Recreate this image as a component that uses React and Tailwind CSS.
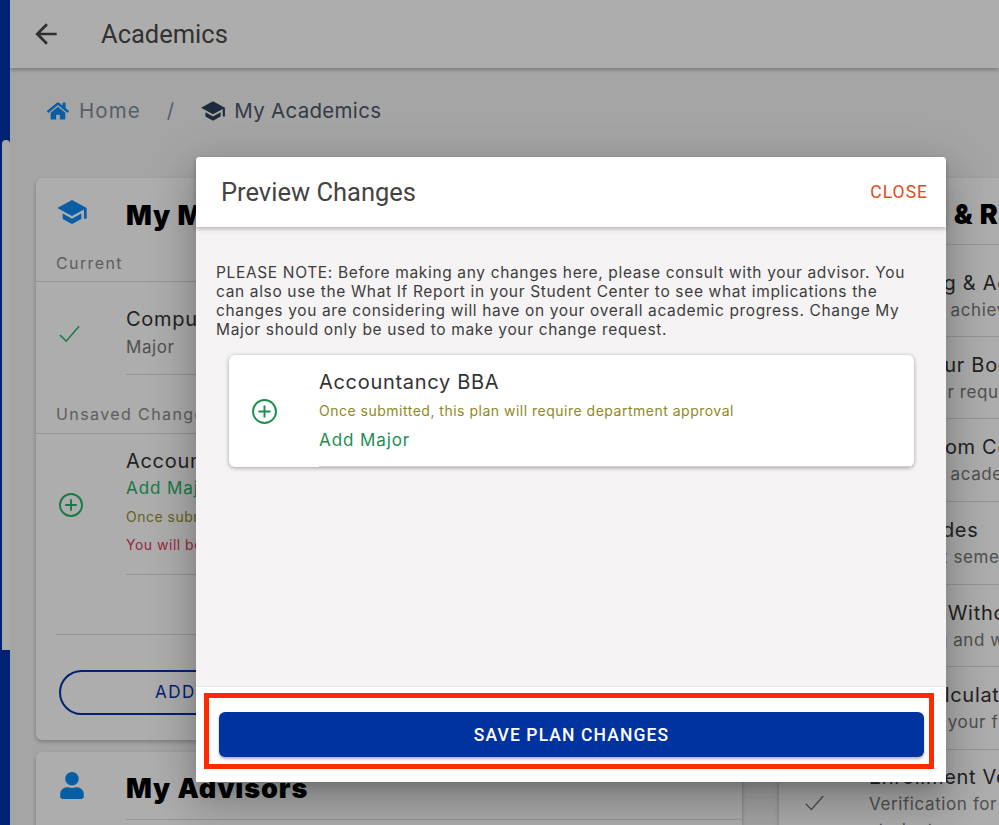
import React from "react";
import { FaHome, FaUser } from "react-icons/fa";
import { MdArrowBack, MdSchool } from "react-icons/md";

const mont = "font-['Inter','Liberation_Sans',sans-serif]";
const robo = "font-['Roboto','Liberation_Sans',sans-serif]";

function Check({ className }) {
  return (
    <svg viewBox="0 0 24 24" className={className} fill="none" stroke="currentColor" strokeWidth="1.6">
      <path d="M2 13.5 L8.5 20 L22 4.5" />
    </svg>
  );
}

function PlusCircle({ className }) {
  return (
    <svg viewBox="0 0 24 24" className={className} fill="none" stroke="currentColor" strokeWidth="1.9">
      <circle cx="12" cy="12" r="11" />
      <path d="M12 6.2 V17.8 M6.2 12 H17.8" />
    </svg>
  );
}

const rightItems = [
  ["Tracking & Advising", "See your achievements", "h-[92px] pt-[10px]"],
  ["Find Your Books", "View your requests", "h-[82px]"],
  ["Classroom Connect", "See your academic", "h-[83px]"],
  ["My Grades", "Your first semester", "h-[83px]"],
  ["Course Without", "Dropping and withdrawal", "h-[82px]"],
  ["GPA Calculator", "Estimate your final", "h-[83px]"],
];

const title = "text-[20px] leading-[28px] tracking-[0.7px] text-[#333]";
const sub = "text-[17px] leading-[26px] tracking-[0.6px] text-[#777]";
const heading = "text-[27px] font-black tracking-[0.9px] text-black";
const label = "text-[16px] tracking-[1.4px] text-[#8a8a8a]";

export default function App() {
  return (
    <div className={`relative flex h-[825px] w-[999px] overflow-hidden bg-[#f5f3f4] ${mont}`}>
      <aside className="relative w-[10px] shrink-0 bg-[#0033a8]">
        <div className="absolute left-[2px] top-[140px] h-[510px] w-[8px] rounded-t-full rounded-b-[3px] bg-[#fafafa]" />
      </aside>
      <main className="flex min-w-0 flex-1 flex-col">
        <header className="flex h-[68px] shrink-0 items-center bg-white pl-[20px] shadow-[0_2px_4px_rgba(0,0,0,0.25)]">
          <MdArrowBack className="text-[32px] text-[#444]" />
          <h1 className={`ml-[39px] text-[25.5px] text-[#4a4a4a] ${robo}`}>Academics</h1>
        </header>
        <nav className="flex h-[86px] shrink-0 items-center pl-[37px] text-[20.5px]">
          <FaHome className="text-[22px] text-[#0e8af4]" />
          <span className="ml-[10px] tracking-[1.1px] text-[#7f8c9f]">Home</span>
          <span className="ml-[26px] text-[#7f8c9f]">/</span>
          <MdSchool className="ml-[26px] text-[26px] text-[#2a3f57]" />
          <span className="ml-[8px] tracking-[0.3px] text-[#4d5866]">My Academics</span>
        </nav>
        <div className="mt-[24px] grid grid-cols-[706px_400px] gap-x-[37px] pl-[26px]">
          <div className="flex flex-col gap-[12px]">
            <section className="flex h-[562px] flex-col rounded-[6px] bg-white shadow-[0_2px_4px_rgba(0,0,0,0.25)]">
              <div className="flex h-[68px] shrink-0 items-center pl-[20px]">
                <MdSchool className="text-[32px] text-[#0e8af4]" />
                <h2 className={`ml-[38px] mt-[8px] ${heading}`}>My Majors &amp; Minors</h2>
              </div>
              <div className={`flex h-[36px] items-center border-b border-[#dcdcdc] pb-[2px] pl-[20px] ${label}`}>Current</div>
              <div className="flex h-[93px] items-center pl-[22px]">
                <Check className="mt-[10px] h-[23px] w-[23px] text-[#26b368]" />
                <div className="ml-[45px] flex h-full flex-1 flex-col justify-center border-b border-[#dcdcdc] pt-[10px]">
                  <span className={title}>Computer Science BS</span>
                  <span className={`${sub} leading-[28px]`}>Major</span>
                </div>
              </div>
              <div className={`flex h-[59px] items-end border-b border-[#dcdcdc] pb-[7px] pl-[20px] ${label}`}>Unsaved Changes</div>
              <div className="flex h-[141px] items-center pl-[23px]">
                <PlusCircle className="h-[24px] w-[24px] text-[#26b368]" />
                <div className="ml-[43px] flex h-full flex-1 flex-col border-b border-[#dcdcdc] pt-[13px]">
                  <span className={title}>Accountancy BBA</span>
                  <span className="text-[17px] leading-[26px] tracking-[0.9px] text-[#26b368]">Add Major</span>
                  <span className="mt-[7px] text-[14px] leading-[18px] tracking-[0.5px] text-[#968f2a]">Once submitted, this plan will require department approval</span>
                  <span className="mt-[10px] text-[14px] leading-[18px] tracking-[0.5px] text-[#e0395f]">You will be asked to confirm</span>
                </div>
              </div>
              <div className="mx-[20px] mt-[59px] border-t border-[#dcdcdc]" />
              <button className="mx-[23px] mt-[35px] h-[45px] rounded-full border-2 border-[#0033a8] pl-[94px] text-left text-[17px] tracking-[1.5px] text-[#0033a8]">ADD A PLAN</button>
            </section>
            <section className="h-[200px] rounded-[6px] bg-white shadow-[0_2px_4px_rgba(0,0,0,0.25)]">
              <div className="flex h-[67px] items-center pl-[21px]">
                <FaUser className="w-[30px] text-[27px] text-[#0e8af4]" />
                <h2 className={`ml-[39px] mt-[8px] ${heading}`}>My Advisors</h2>
              </div>
              <div className="ml-[90px] border-t border-[#dcdcdc]" />
            </section>
          </div>
          <section className="h-[700px] rounded-[6px] bg-white shadow-[0_2px_4px_rgba(0,0,0,0.25)]">
            <div className="flex h-[67px] items-center border-b border-[#dcdcdc] pl-[90px]">
              <h2 className={`mt-[8px] whitespace-nowrap ${heading}`}>Tools &amp; Resources</h2>
            </div>
            {rightItems.map(([t, s, h]) => (
              <div key={t} className={`flex flex-col justify-center border-b border-[#dcdcdc] pl-[90px] ${h}`}>
                <span className={`whitespace-nowrap ${title}`}>{t}</span>
                <span className={`whitespace-nowrap ${sub}`}>{s}</span>
              </div>
            ))}
            <div className="flex items-start pl-[25px] pt-[13px]">
              <Check className="mt-[29px] h-[21px] w-[21px] text-[#777]" />
              <div className="ml-[44px]">
                <div className={`whitespace-nowrap ${title}`}>Enrollment Verification</div>
                <div className={`whitespace-nowrap ${sub}`}>Verification for</div>
                <div className={`whitespace-nowrap ${sub}`}>students</div>
              </div>
            </div>
          </section>
        </div>
      </main>

      <div className="absolute inset-0 bg-[rgba(0,0,0,0.32)]" />

      <div className="absolute left-[196px] top-[157px] flex h-[625px] w-[750px] flex-col rounded-[4px] bg-[#f5f3f4] shadow-[0_11px_15px_-7px_rgba(0,0,0,0.2),0_24px_38px_3px_rgba(0,0,0,0.14),0_9px_46px_8px_rgba(0,0,0,0.12)]">
        <div className={`z-10 flex h-[70px] shrink-0 items-center justify-between rounded-t-[4px] bg-white pl-[25px] pr-[18px] shadow-[0_2px_4px_rgba(0,0,0,0.25)] ${robo}`}>
          <h2 className="text-[25.5px] text-[#444]">Preview Changes</h2>
          <button className="text-[17.5px] tracking-[1px] text-[#e04d1c]">CLOSE</button>
        </div>
        <div className="flex-1 pl-[20px] pr-[32px] pt-[36px]">
          <p className="m-0 w-[710px] text-[15.5px] leading-[19px] tracking-[0.65px] text-[#3d3d3d]">
            PLEASE NOTE: Before making any changes here, please consult with your advisor. You<br />
            can also use the What If Report in your Student Center to see what implications the<br />
            changes you are considering will have on your overall academic progress. Change My<br />
            Major should only be used to make your change request.
          </p>
          <div className="ml-[13px] mt-[16px] flex h-[112px] w-[685px] items-center rounded-[6px] bg-white shadow-[0_1px_4px_rgba(0,0,0,0.35)]">
            <PlusCircle className="ml-[23px] h-[25px] w-[25px] text-[#1e8e50]" />
            <div className="ml-[42px] flex h-full flex-1 flex-col justify-center border-b border-[#cfcfcf]">
              <span className="text-[20px] leading-[28px] tracking-[0.7px] text-[#333]">Accountancy BBA</span>
              <span className="mt-[3px] text-[14px] leading-[24px] tracking-[0.5px] text-[#8f8a1e]">Once submitted, this plan will require department approval</span>
              <span className="mt-[3px] text-[17px] leading-[28px] tracking-[0.9px] text-[#1e8e50]">Add Major</span>
            </div>
          </div>
        </div>
        <div className="h-[96px] shrink-0 border-t border-[#e6e6e6] bg-white pl-[8px] pr-[12px] pt-[6px]">
          <div className="h-[76px] border-[5px] border-[#ff2a00] pl-[10px] pr-[5px] pt-[14px]">
            <button className={`flex h-[45px] w-full items-center justify-center rounded-[6px] bg-[#0033a0] pt-[1px] text-[17.5px] font-medium tracking-[1.1px] text-white shadow-[0_2px_3px_rgba(0,0,0,0.3)] ${robo}`}>SAVE PLAN CHANGES</button>
          </div>
        </div>
      </div>
    </div>
  );
}
